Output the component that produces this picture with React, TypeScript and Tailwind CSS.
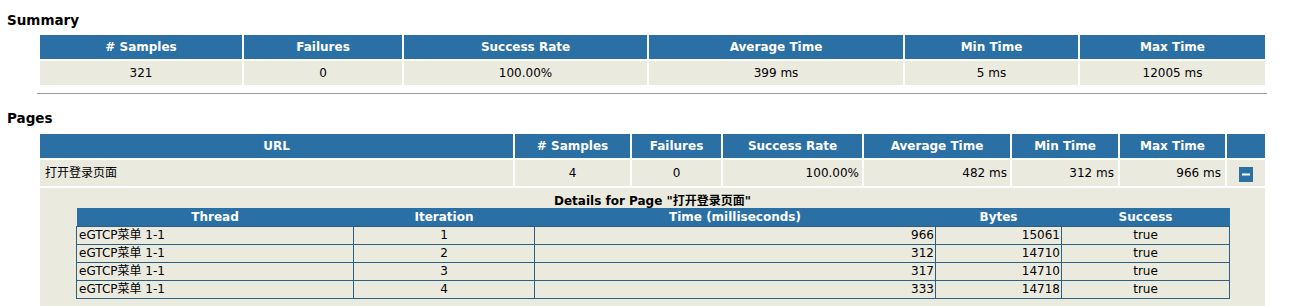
import React from "react";

const font = { fontFamily: '"DejaVu Sans", "Noto Sans CJK SC", sans-serif' };

const summaryCols = [
    { label: "# Samples", value: "321", w: "w-[202px]" },
    { label: "Failures", value: "0", w: "w-[158px]" },
    { label: "Success Rate", value: "100.00%", w: "w-[243px]" },
    { label: "Average Time", value: "399 ms", w: "w-[254px]" },
    { label: "Min Time", value: "5 ms", w: "w-[173px]" },
    { label: "Max Time", value: "12005 ms", w: "w-[185px]" },
];

const details = [
    { thread: "eGTCP菜单 1-1", iteration: 1, time: 966, bytes: 15061, success: "true" },
    { thread: "eGTCP菜单 1-1", iteration: 2, time: 312, bytes: 14710, success: "true" },
    { thread: "eGTCP菜单 1-1", iteration: 3, time: 317, bytes: 14710, success: "true" },
    { thread: "eGTCP菜单 1-1", iteration: 4, time: 333, bytes: 14718, success: "true" },
];

const th = "bg-[#2a70a5] text-white font-bold text-[12px] h-[24px] p-0 text-center";
const td = "bg-[#ebeadf] text-black text-[12px] p-0";

function MinusIcon() {
    return (
        <svg width="14" height="15" viewBox="0 0 14 15" className="inline-block">
            <rect x="0" y="0" width="14" height="15" fill="#2a70a5" />
            <rect x="3" y="6.5" width="8" height="2" fill="#ffffff" />
        </svg>
    );
}

export default function App() {
    return (
        <div className="bg-white w-[1295px] h-[306px] overflow-hidden text-black" style={font}>
            <h1 className="text-[13.5px] font-bold pl-[7px] pt-[12px] leading-[16px]">Summary</h1>

            <table className="ml-[38px] mt-[5px] table-fixed border-separate border-spacing-[2px] w-[1229px]">
                <thead>
                    <tr>
                        {summaryCols.map((c) => (
                            <th key={c.label} className={`${th} ${c.w}`}>
                                {c.label}
                            </th>
                        ))}
                    </tr>
                </thead>
                <tbody>
                    <tr>
                        {summaryCols.map((c) => (
                            <td key={c.label} className={`${td} h-[24px] text-center`}>
                                {c.value}
                            </td>
                        ))}
                    </tr>
                </tbody>
            </table>

            <div className="ml-[37px] w-[1230px] mt-[6px] border-t border-[#9c9c9c]" />

            <h1 className="text-[13.5px] font-bold pl-[7px] pt-[16px] leading-[16px]">Pages</h1>

            <table className="ml-[38px] mt-[6px] table-fixed border-separate border-spacing-[2px] w-[1229px]">
                <thead>
                    <tr>
                        <th className={`${th} w-[473px] h-[23px]`}>URL</th>
                        <th className={`${th} w-[115px] h-[23px]`}># Samples</th>
                        <th className={`${th} w-[89px] h-[23px]`}>Failures</th>
                        <th className={`${th} w-[139px] h-[23px]`}>Success Rate</th>
                        <th className={`${th} w-[146px] h-[23px]`}>Average Time</th>
                        <th className={`${th} w-[106px] h-[23px]`}>Min Time</th>
                        <th className={`${th} w-[105px] h-[23px]`}>Max Time</th>
                        <th className={`${th} w-[38px] h-[23px]`}></th>
                    </tr>
                </thead>
                <tbody>
                    <tr>
                        <td className={`${td} h-[26px] text-left pl-[5px]`}>打开登录页面</td>
                        <td className={`${td} text-center`}>4</td>
                        <td className={`${td} text-center`}>0</td>
                        <td className={`${td} text-right pr-[3px]`}>100.00%</td>
                        <td className={`${td} text-right pr-[3px]`}>482 ms</td>
                        <td className={`${td} text-right pr-[4px]`}>312 ms</td>
                        <td className={`${td} text-right pr-[4px]`}>966 ms</td>
                        <td className={`${td} text-center`}>
                            <div className="flex justify-center pt-[2px]">
                                <MinusIcon />
                            </div>
                        </td>
                    </tr>
                    <tr>
                        <td colSpan={8} className={`${td} align-top`}>
                            <div className="text-center font-bold text-[12px] leading-[14px] pt-[6px]">
                                Details for Page "打开登录页面"
                            </div>
                            <table className="ml-[36px] table-fixed border-collapse w-[1153px] text-[12px]">
                                <thead>
                                    <tr>
                                        <th className="bg-[#2a70a5] text-white font-bold w-[277px] h-[18px] p-0 leading-[14px]">Thread</th>
                                        <th className="bg-[#2a70a5] text-white font-bold w-[181px] p-0 leading-[14px]">Iteration</th>
                                        <th className="bg-[#2a70a5] text-white font-bold w-[401px] p-0 leading-[14px]">Time (milliseconds)</th>
                                        <th className="bg-[#2a70a5] text-white font-bold w-[126px] p-0 leading-[14px]">Bytes</th>
                                        <th className="bg-[#2a70a5] text-white font-bold w-[168px] p-0 leading-[14px]">Success</th>
                                    </tr>
                                </thead>
                                <tbody>
                                    {details.map((d) => (
                                        <tr key={d.iteration} className="h-[18px]">
                                            <td className="border border-[#2e5f7e] pl-[2px] p-0 leading-[15px]">{d.thread}</td>
                                            <td className="border border-[#2e5f7e] text-center p-0 leading-[15px]">{d.iteration}</td>
                                            <td className="border border-[#2e5f7e] text-right pr-[1px] p-0 leading-[15px]">{d.time}</td>
                                            <td className="border border-[#2e5f7e] text-right pr-[1px] p-0 leading-[15px]">{d.bytes}</td>
                                            <td className="border border-[#2e5f7e] text-center p-0 leading-[15px]">{d.success}</td>
                                        </tr>
                                    ))}
                                </tbody>
                            </table>
                            <div className="h-[12px]" />
                        </td>
                    </tr>
                </tbody>
            </table>
        </div>
    );
}
